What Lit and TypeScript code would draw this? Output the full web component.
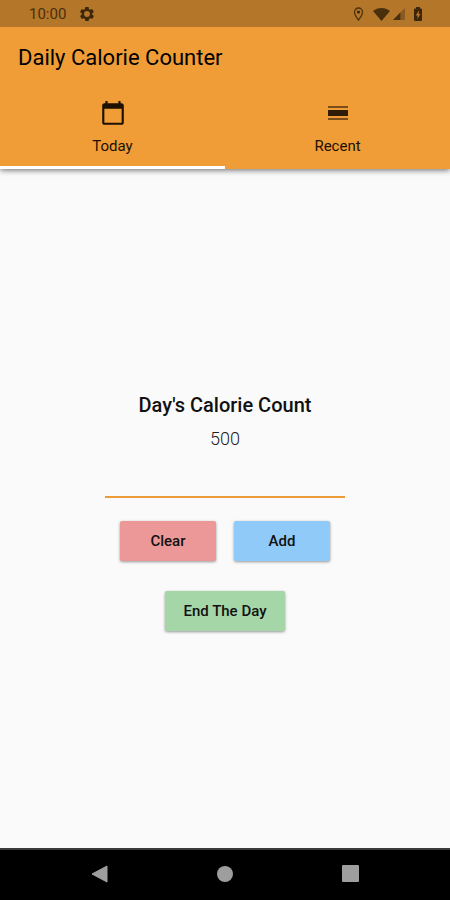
import { LitElement, html, css } from "lit";
import { customElement, state } from "lit/decorators.js";

@customElement("app-root")
export class AppRoot extends LitElement {
  @state() private tab: "today" | "recent" = "today";

  static styles = css`
    :host {
      display: flex;
      flex-direction: column;
      min-height: 100vh;
      background: #fafafa;
      color: #1c1205;
      font-family: Roboto, "Liberation Sans", sans-serif;
    }
    * {
      box-sizing: border-box;
    }
    button {
      border: 0;
      padding: 0;
      background: none;
      color: inherit;
      font: inherit;
      cursor: pointer;
    }
    svg {
      display: block;
    }
    .header {
      background: #f09d38;
      box-shadow: 0 1px 6px rgba(0, 0, 0, 0.6);
    }
    .status {
      display: flex;
      align-items: center;
      justify-content: space-between;
      height: 27px;
      padding: 1px 28px 0 29px;
      background: #b47629;
      color: #4a2f0d;
      font-size: 15px;
    }
    .group {
      display: flex;
      align-items: center;
    }
    .clock {
      margin-right: 14px;
    }
    .pin {
      margin-right: 9px;
    }
    .wifi {
      margin-right: 3px;
    }
    .signal {
      margin-right: 9px;
    }
    .title {
      margin: 0;
      padding: 0 18px;
      font-size: 22px;
      line-height: 62px;
      font-weight: 400;
      color: #000;
    }
    .tabs {
      display: grid;
      grid-template-columns: 1fr 1fr;
    }
    .tab {
      display: flex;
      flex-direction: column;
      align-items: center;
      gap: 9px;
      height: 80px;
      padding-top: 11px;
      border-bottom: 3px solid transparent;
      font-size: 15px;
      line-height: 20px;
      font-weight: 400;
      color: #1c1102;
    }
    .tab.active {
      border-bottom-color: #fff;
    }
    .main {
      flex: 1;
      display: flex;
      flex-direction: column;
      align-items: center;
      justify-content: center;
    }
    .heading {
      margin: 0;
      font-size: 20px;
      line-height: 36px;
      font-weight: 500;
      color: #111;
    }
    .count {
      margin: 0;
      font-size: 18px;
      line-height: 32px;
      font-weight: 300;
      color: #222;
    }
    .entry {
      width: 240px;
      height: 43px;
      margin-bottom: 23px;
      padding: 0;
      border: 0;
      border-bottom: 2px solid #eb9c38;
      border-radius: 0;
      outline: 0;
      background: transparent;
      font: inherit;
      font-size: 18px;
      text-align: center;
    }
    .actions {
      display: flex;
      gap: 18px;
      margin-bottom: 30px;
    }
    .action {
      min-width: 96px;
      height: 40px;
      padding: 0 18px;
      border-radius: 2px;
      box-shadow: 0 1px 3px rgba(0, 0, 0, 0.4);
      font-size: 15px;
      font-weight: 500;
      color: #111;
    }
    .clear {
      background: #ec9898;
    }
    .add {
      background: #90caf9;
    }
    .end {
      background: #a5d6a7;
    }
    .nav {
      display: grid;
      grid-template-columns: 3fr 10fr 10fr 10fr 3fr;
      height: 52px;
      padding-bottom: 2px;
      border-top: 2px solid #3a3a3a;
      background: #000;
    }
    .key {
      display: flex;
      align-items: center;
      justify-content: center;
    }
    .key:first-child {
      grid-column: 2;
    }
  `;

  render() {
    return html`
      <header class="header">
        <div class="status">
          <div class="group">
            <span class="clock">10:00</span>
            <svg width="14" height="14" viewBox="2 2 20 20" fill="#3d270b" fill-rule="evenodd">
              <path d="M19.4 13c0-.3.1-.6.1-1s0-.7-.1-1l2.1-1.600a.5.5 0 0 0 .1-.6l-2-3.500a.5.5 0 0 0-.6-.2l-2.500 1a7 7 0 0 0-1.700-1l-.4-2.600a.5.5 0 0 0-.5-.4h-4a.5.5 0 0 0-.5.4L9 5.100a7 7 0 0 0-1.700 1l-2.500-1a.5.5 0 0 0-.6.2l-2 3.500a.5.5 0 0 0 .1.6L4.500 11a8 8 0 0 0 0 2l-2.100 1.600a.5.5 0 0 0-.1.6l2 3.500c.1.200.4.3.6.2l2.500-1a7 7 0 0 0 1.700 1l.4 2.600c0 .3.200.4.5.4h4c.3 0 .5-.1.5-.4l.4-2.600a7 7 0 0 0 1.700-1l2.500 1c.2.1.5 0 .6-.2l2-3.500a.5.5 0 0 0-.1-.6zM12 16.200a4.200 4.200 0 1 1 0-8.400 4.200 4.200 0 0 1 0 8.400z" />
            </svg>
          </div>
          <div class="group">
            <svg class="pin" width="11" height="14" viewBox="0 0 10 14" fill="none">
              <path d="M5 13C2.500 9.800 1 7.400 1 5a4 4 0 0 1 8 0c0 2.400-1.500 4.800-4 8z" stroke="#4f330f" stroke-width="1.300" />
              <circle cx="5" cy="5" r="1.600" fill="#3d270b" />
            </svg>
            <svg class="wifi" width="17" height="13" viewBox="0 0 17 13">
              <path d="M8.500 13 0 3C2.500 1 5.400 0 8.500 0S14.500 1 17 3z" fill="#4a2f0d" />
            </svg>
            <svg class="signal" width="12" height="12" viewBox="0 0 13 13">
              <path d="M13 0v13H0z" fill="#8a5a20" />
              <path d="M8 5v8H0z" fill="#4a2f0d" />
            </svg>
            <svg width="8" height="14" viewBox="0 0 8 14">
              <path d="M2 0h4v1.500h1q1 0 1 1V13q0 1-1 1H1q-1 0-1-1V2.500q0-1 1-1h1z" fill="#3d270b" />
              <path d="M4.800 3.500 1.800 8.500h1.800v3.500l2.700-5H4.800z" fill="#b47629" />
            </svg>
          </div>
        </div>
        <h1 class="title">Daily Calorie Counter</h1>
        <div class="tabs" role="tablist">
          <button
            class="tab ${this.tab === "today" ? "active" : ""}"
            role="tab"
            aria-selected=${this.tab === "today"}
            @click=${() => (this.tab = "today")}
          >
            <svg width="26" height="27" viewBox="0 0 24 25" fill="#1c1102">
              <path d="M20 3h-1V1h-2v2H7V1H5v2H4c-1.100 0-2 .9-2 2v16c0 1.100.9 2 2 2h16c1.100 0 2-.9 2-2V5c0-1.100-.9-2-2-2zm0 18H4V8h16v13z" />
            </svg>
            <span>Today</span>
          </button>
          <button
            class="tab ${this.tab === "recent" ? "active" : ""}"
            role="tab"
            aria-selected=${this.tab === "recent"}
            @click=${() => (this.tab = "recent")}
          >
            <svg width="26" height="27" viewBox="0 0 26 27">
              <path d="M3 6h20v2H3zM3 18h20v2H3z" fill="#7a4d18" />
              <path d="M3 10h20v6H3z" fill="#2e1c05" />
            </svg>
            <span>Recent</span>
          </button>
        </div>
      </header>
      <main class="main">
        <h2 class="heading">Day's Calorie Count</h2>
        <p class="count">500</p>
        <input class="entry" type="text" inputmode="numeric" aria-label="Calories" />
        <div class="actions">
          <button class="action clear">Clear</button>
          <button class="action add">Add</button>
        </div>
        <button class="action end">End The Day</button>
      </main>
      <nav class="nav">
        <button class="key" aria-label="Back">
          <svg width="18" height="18" viewBox="0 0 18 18">
            <path d="M16 1v16L1 9z" fill="#9e9e9e" stroke="#9e9e9e" stroke-linejoin="round" />
          </svg>
        </button>
        <button class="key" aria-label="Home">
          <svg width="18" height="18" viewBox="0 0 18 18">
            <circle cx="9" cy="9" r="8" fill="#9e9e9e" />
          </svg>
        </button>
        <button class="key" aria-label="Overview">
          <svg width="18" height="18" viewBox="0 0 18 18">
            <rect x="1" width="17" height="17" rx="1" fill="#9e9e9e" />
          </svg>
        </button>
      </nav>
    `;
  }
}
